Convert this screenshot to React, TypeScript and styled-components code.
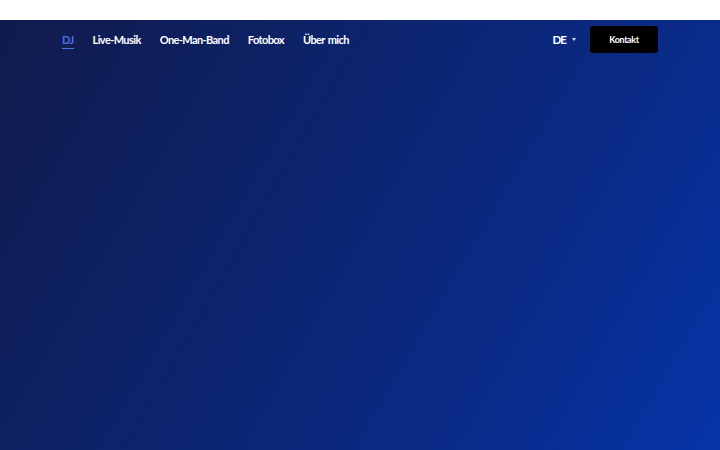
import React from "react";
import styled, { createGlobalStyle } from "styled-components";

const GlobalStyle = createGlobalStyle`
  html, body {
    margin: 0;
    padding: 0;
    background: #ffffff;
    font-family: Lato, "Open Sans", sans-serif;
  }
`;

const Page = styled.div`
  width: 100vw;
  height: 100vh;
  display: flex;
  flex-direction: column;
`;

const TopStrip = styled.div`
  height: 20px;
  background: #ffffff;
`;

const Hero = styled.section`
  flex: 1;
  background: linear-gradient(
    120deg,
    #111a4c 0%,
    #0d2369 35%,
    #0a2a86 70%,
    #0634a8 100%
  );
`;

const NavBar = styled.nav`
  display: flex;
  align-items: center;
  justify-content: space-between;
  padding: 5px 62px 0 62px;
  height: 28px;
`;

const Links = styled.ul`
  display: flex;
  gap: 19px;
  list-style: none;
  margin: 0;
  padding: 0;
`;

const NavLink = styled.li<{ $active?: boolean }>`
  position: relative;
  font-size: 11px;
  font-weight: 700;
  letter-spacing: -0.6px;
  word-spacing: 1px;
  color: ${(p) => (p.$active ? "#4a72e6" : "#ffffff")};
  cursor: pointer;
  &::after {
    content: "";
    display: ${(p) => (p.$active ? "block" : "none")};
    position: absolute;
    left: 0;
    right: 0;
    bottom: -3px;
    height: 1px;
    background: #4a72e6;
  }
`;

const Right = styled.div`
  display: flex;
  align-items: center;
  gap: 14px;
`;

const Lang = styled.div`
  display: flex;
  align-items: center;
  gap: 6px;
  color: #ffffff;
  font-size: 11.5px;
  font-weight: 700;
  letter-spacing: -0.9px;
`;

const Caret = styled.span`
  width: 0;
  height: 0;
  border-left: 2.5px solid transparent;
  border-right: 2.5px solid transparent;
  border-top: 3px solid #d8defa;
`;

const ContactButton = styled.button`
  width: 68px;
  height: 27px;
  border: none;
  border-radius: 3px;
  background: #000000;
  color: #ffffff;
  font-family: Lato, sans-serif;
  font-size: 9px;
  font-weight: 700;
  letter-spacing: -0.4px;
  cursor: pointer;
`;

const links = ["DJ", "Live-Musik", "One-Man-Band", "Fotobox", "Über mich"];

export default function App() {
  return (
    <>
      <GlobalStyle />
      <Page>
        <TopStrip />
        <Hero>
          <NavBar>
            <Links>
              {links.map((l, i) => (
                <NavLink key={l} $active={i === 0}>
                  {l}
                </NavLink>
              ))}
            </Links>
            <Right>
              <Lang>
                DE
                <Caret />
              </Lang>
              <ContactButton>Kontakt</ContactButton>
            </Right>
          </NavBar>
        </Hero>
      </Page>
    </>
  );
}
